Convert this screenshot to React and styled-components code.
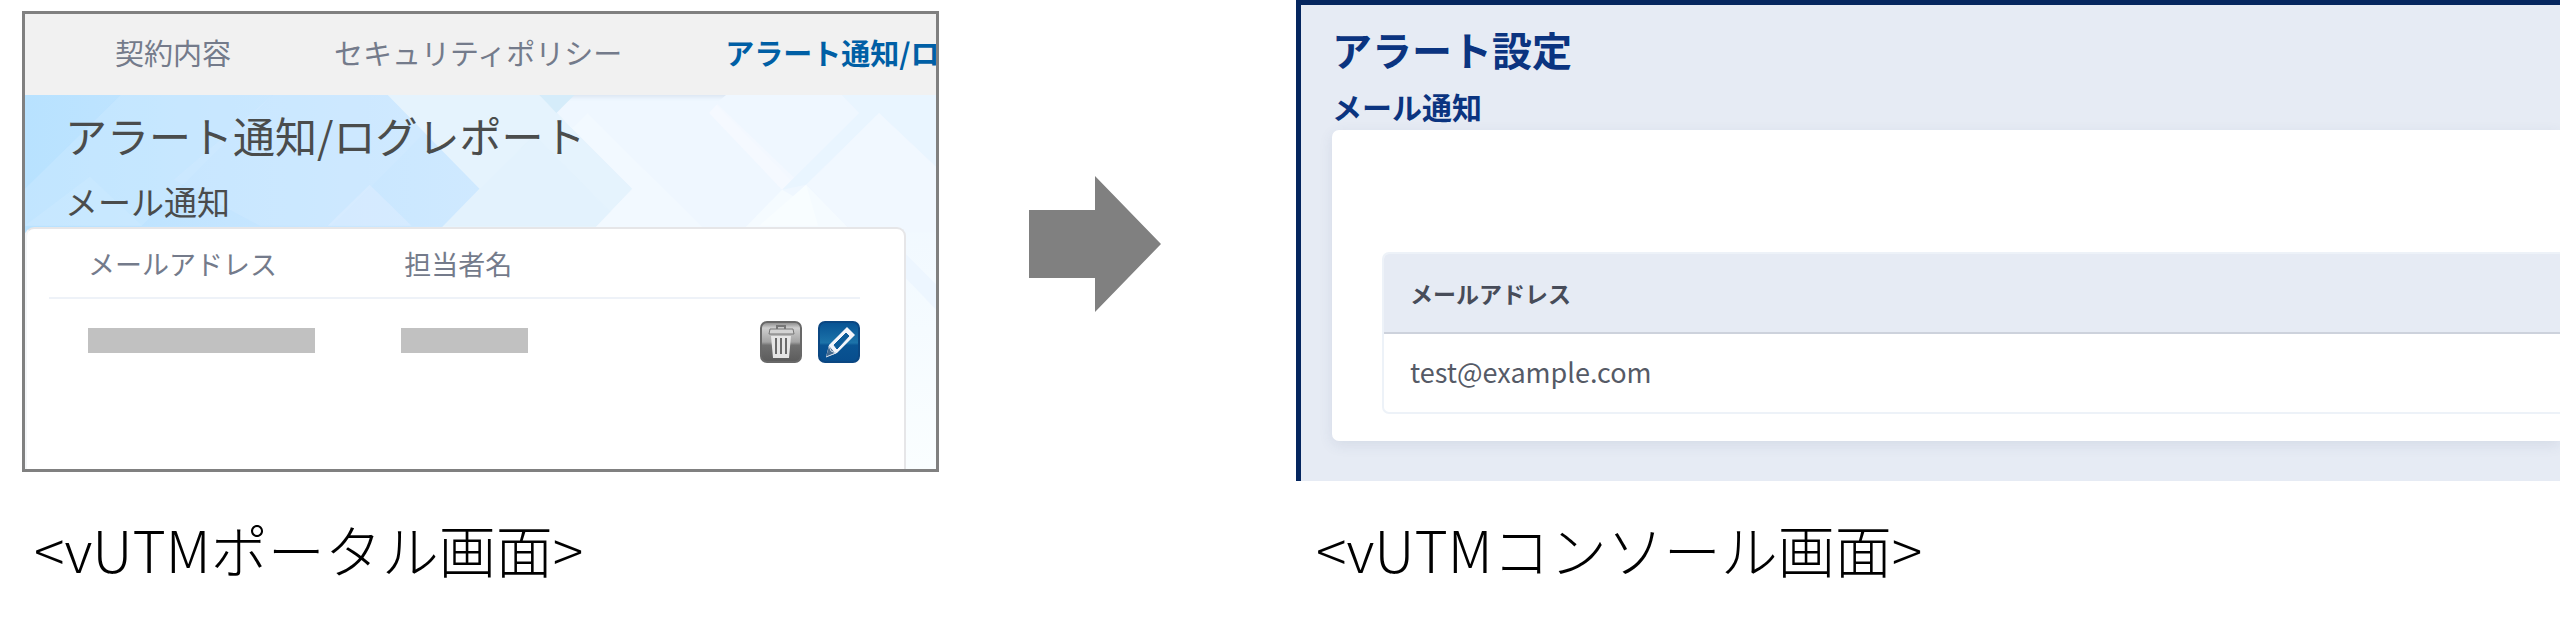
import React from "react";
import styled, { createGlobalStyle } from "styled-components";

const GlobalStyle = createGlobalStyle`
    * {
        box-sizing: border-box;
    }
    body {
        margin: 0;
        background: #fff;
        font-family: "Noto Sans CJK JP", "Noto Sans", sans-serif;
    }
`;

const Page = styled.main`
    display: grid;
    grid-template-columns: 917fr 357fr 1264fr;
    padding-left: 22px;
`;

const Caption = styled.p`
    margin: 0;
    padding: 27px ${({ $inset }) => $inset}px 0;
    font-size: 57px;
    font-weight: 300;
    line-height: 80px;
    color: #000;
    white-space: nowrap;
`;

/* Portal (old screen) */

const Portal = styled.section`
    align-self: start;
    margin-top: 11px;
    border: 3px solid #808080;
    overflow: hidden;
`;

const PortalNav = styled.nav`
    display: flex;
    align-items: center;
    gap: 103px;
    height: 81px;
    padding: 0 0 6px 90px;
    background: #f1f1f1;
    overflow: hidden;
`;

const PortalLink = styled.a`
    flex: none;
    font-size: 29px;
    line-height: 40px;
    font-weight: ${({ $active }) => ($active ? 700 : 400)};
    color: ${({ $active }) => ($active ? "#005fa5" : "#747b8b")};
    text-decoration: none;
    white-space: nowrap;
`;

const PortalBody = styled.div`
    position: relative;
    z-index: 0;
    padding-right: 30px;
    background: #eff7ff;
    box-shadow: inset 0 4px 4px -2px rgba(100, 130, 160, 0.15);
`;

const Backdrop = styled.svg`
    position: absolute;
    inset: 0;
    width: 100%;
    height: 100%;
    z-index: -1;
`;

const PortalTitle = styled.h1`
    margin: 0;
    padding: 8px 0 0 40px;
    font-size: 42px;
    line-height: 64px;
    font-weight: 400;
    color: #4a4c4c;
`;

const PortalSubtitle = styled.h2`
    margin: 0;
    padding: 10px 0 2px 40px;
    font-size: 33px;
    line-height: 48px;
    font-weight: 400;
    color: #4a4c4c;
`;

const PortalCard = styled.div`
    padding: 0 44px 106px 22px;
    background: #fff;
    border: 2px solid #e6e6e8;
    border-bottom: none;
    border-left-color: #f4f6f8;
    border-radius: 9px 9px 0 0;
`;

const PortalTable = styled.table`
    width: 100%;
    table-layout: fixed;
    border-collapse: collapse;
    th {
        height: 69px;
        padding: 0 0 0 39px;
        border-bottom: 2px solid #eef2f8;
        font-size: 27px;
        font-weight: 400;
        text-align: left;
        color: #747b8b;
    }
    th:first-child {
        width: 39%;
    }
    th:last-child {
        width: 30%;
    }
    td {
        padding: 22px 0 0 39px;
    }
    td:nth-child(2) {
        padding-left: 36px;
    }
`;

const Mask = styled.span`
    display: block;
    width: ${({ $wide }) => ($wide ? "82%" : "127px")};
    height: 25px;
    margin-bottom: 4px;
    background: #c1c1c1;
`;

const Actions = styled.div`
    display: flex;
    justify-content: flex-end;
    gap: 16px;
`;

const IconButton = styled.button`
    display: block;
    width: 42px;
    height: 42px;
    padding: 0;
    border: none;
    background: none;
    cursor: pointer;
    svg {
        display: block;
    }
`;

/* Arrow between the two screens */

const ArrowCell = styled.div`
    display: flex;
    align-items: center;
    justify-content: center;
    padding: 7px 46px 0 0;
`;

/* Console (new screen) */

const Console = styled.section`
    padding: 16px 0 40px 31px;
    background: #e6ebf4;
    border: solid #05265f;
    border-width: 5px 0 0 5px;
    overflow: hidden;
`;

const ConsoleTitle = styled.h1`
    margin: 0;
    font-size: 40px;
    line-height: 56px;
    font-weight: 700;
    color: #0b3480;
`;

const ConsoleSubtitle = styled.h2`
    margin: 0;
    padding: 9px 0 4px;
    font-size: 30px;
    line-height: 40px;
    font-weight: 700;
    color: #0b3480;
`;

const ConsoleCard = styled.div`
    padding: 122px 0 27px 50px;
    background: #fff;
    border-radius: 7px 0 0 7px;
    box-shadow: 0 4px 14px rgba(60, 80, 120, 0.1);
`;

const TableFrame = styled.div`
    border: 2px solid #edf2f8;
    border-right: none;
    border-radius: 7px 0 0 7px;
    overflow: hidden;
`;

const ConsoleTable = styled.table`
    width: 100%;
    border-collapse: collapse;
    text-align: left;
    th {
        height: 79px;
        padding: 0 26px;
        background: #e6ebf4;
        border-bottom: 2px solid #cdd2dc;
        font-size: 23px;
        font-weight: 700;
        color: #474c59;
    }
    td {
        height: 79px;
        padding: 0 26px 4px;
        font-size: 27px;
        color: #555a66;
    }
`;

const PortalBackdrop = () => (
    <Backdrop viewBox="0 0 912 375" preserveAspectRatio="none" aria-hidden="true">
        <defs>
            <linearGradient id="sky" x1="0" y1="0" x2="1" y2="0">
                <stop offset="0" stopColor="#b8e2ff" />
                <stop offset="0.45" stopColor="#c4e5ff" />
                <stop offset="1" stopColor="#cfe9ff" />
            </linearGradient>
            <linearGradient id="fade" x1="0" y1="0" x2="0" y2="1">
                <stop offset="0" stopColor="#f0f8ff" />
                <stop offset="1" stopColor="#fafeff" />
            </linearGradient>
        </defs>
        <rect x="840" y="95" width="72" height="280" fill="url(#fade)" />
        <polygon points="840,140 912,215 912,190 840,118" fill="#edf6ff" />
        <polygon points="363,0 515,0 608,94 566,138 412,138" fill="#e5f3fd" />
        <polygon points="455,95 510,40 600,131 419,131" fill="#dff1fc" opacity="0.35" />
        <polygon points="515,0 550,0 532,18" fill="#d5ecfa" />
        <polygon points="0,0 363,0 455,94 412,138 0,138" fill="url(#sky)" />
        <polygon points="96,0 248,0 117,131 0,131 0,94" fill="#cfeaff" opacity="0.4" />
        <polygon points="248,0 363,0 400,38 307,131 235,131 149,85" fill="#d4eaff" opacity="0.35" />
        <polygon points="345,90 387,131 303,131" fill="#dcedff" opacity="0.6" />
        <polygon points="0,131 65,82 117,131" fill="#d0eaff" opacity="0.4" />
        <polygon points="532,18 548,33 563,18 684,138 566,138 608,94" fill="#f2f9ff" />
        <polygon points="685,18 702,0 818,0 835,18 758,95" fill="#f3f8ff" />
        <polygon points="702,0 818,0 835,18 770,83 692,8" fill="#eff7ff" />
        <polygon points="692,10 767,86 758,95 685,18" fill="#f5f9ff" />
        <polygon points="818,0 912,0 912,72 855,18 782,90 758,95 835,18" fill="#e9f5ff" />
        <polygon points="855,18 912,72 912,138 829,138 782,90" fill="#f1f8ff" />
        <polygon points="716,138 758,95 770,102 782,90 829,138" fill="#f5fbff" />
        <polygon points="735,131 782,90 794,131" fill="#f8fdff" />
    </Backdrop>
);

const TrashIcon = () => (
    <svg width="42" height="42" viewBox="0 0 42 42" aria-hidden="true">
        <defs>
            <linearGradient id="steel" x1="0" y1="0" x2="0" y2="1">
                <stop offset="0" stopColor="#858585" />
                <stop offset="0.15" stopColor="#cfcfcf" />
                <stop offset="0.5" stopColor="#a4a4a4" />
                <stop offset="0.58" stopColor="#707070" />
                <stop offset="1" stopColor="#5b5b5b" />
            </linearGradient>
        </defs>
        <rect x="1" y="1" width="40" height="40" rx="6" fill="url(#steel)" stroke="#686868" strokeWidth="2" />
        <path d="M17 8V5h8v3" fill="none" stroke="#777" strokeWidth="2" />
        <path d="M10 8h23l1 5H9z" fill="#d4d4d4" stroke="#777" />
        <path d="M11 15h20l-2 22H13z" fill="#e6e6e6" />
        <path d="M16 17v16M21 17v16M26 17v16" stroke="#6b6b6b" strokeWidth="2" />
    </svg>
);

const PencilIcon = () => (
    <svg width="42" height="42" viewBox="0 0 42 42" aria-hidden="true">
        <defs>
            <linearGradient id="blue" x1="0" y1="0" x2="0" y2="1">
                <stop offset="0" stopColor="#075293" />
                <stop offset="0.52" stopColor="#1c73a9" />
                <stop offset="0.58" stopColor="#095493" />
                <stop offset="1" stopColor="#074d8d" />
            </linearGradient>
        </defs>
        <rect x="1" y="1" width="40" height="40" rx="6" fill="url(#blue)" stroke="#0b4782" strokeWidth="2" />
        <path d="M8 36l3-12L29 6l8 8-18 18z" fill="#f4f5fa" />
        <path d="M16 24l12-12 3 3-12 13z" fill="#0d5b99" stroke="#0d5b99" strokeLinejoin="round" />
        <path d="M8 36l3-11 6 7z" fill="#42698f" />
        <path d="M11 25l2 5 5 2-10 4" fill="none" stroke="#d5e0ed" strokeWidth="1" />
    </svg>
);

const App = () => {
    return (
        <>
            <GlobalStyle />
            <Page>
                <Portal>
                    <PortalNav>
                        <PortalLink href="#contract">契約内容</PortalLink>
                        <PortalLink href="#policy">セキュリティポリシー</PortalLink>
                        <PortalLink href="#alert" $active>アラート通知/ロ</PortalLink>
                    </PortalNav>
                    <PortalBody>
                        <PortalBackdrop />
                        <PortalTitle>アラート通知/ログレポート</PortalTitle>
                        <PortalSubtitle>メール通知</PortalSubtitle>
                        <PortalCard>
                            <PortalTable>
                                <thead>
                                    <tr>
                                        <th>メールアドレス</th>
                                        <th>担当者名</th>
                                        <th />
                                    </tr>
                                </thead>
                                <tbody>
                                    <tr>
                                        <td><Mask $wide /></td>
                                        <td><Mask /></td>
                                        <td>
                                            <Actions>
                                                <IconButton aria-label="削除"><TrashIcon /></IconButton>
                                                <IconButton aria-label="編集"><PencilIcon /></IconButton>
                                            </Actions>
                                        </td>
                                    </tr>
                                </tbody>
                            </PortalTable>
                        </PortalCard>
                    </PortalBody>
                </Portal>

                <ArrowCell>
                    <svg width="132" height="136" viewBox="0 0 132 136" aria-hidden="true">
                        <path d="M0 34h66V0l66 68-66 68v-34H0z" fill="#808080" />
                    </svg>
                </ArrowCell>

                <Console>
                    <ConsoleTitle>アラート設定</ConsoleTitle>
                    <ConsoleSubtitle>メール通知</ConsoleSubtitle>
                    <ConsoleCard>
                        <TableFrame>
                            <ConsoleTable>
                                <thead>
                                    <tr>
                                        <th>メールアドレス</th>
                                    </tr>
                                </thead>
                                <tbody>
                                    <tr>
                                        <td>test@example.com</td>
                                    </tr>
                                </tbody>
                            </ConsoleTable>
                        </TableFrame>
                    </ConsoleCard>
                </Console>

                <Caption $inset={12}>&lt;vUTMポータル画面&gt;</Caption>
                <span />
                <Caption $inset={20}>&lt;vUTMコンソール画面&gt;</Caption>
            </Page>
        </>
    );
};

export default App;
